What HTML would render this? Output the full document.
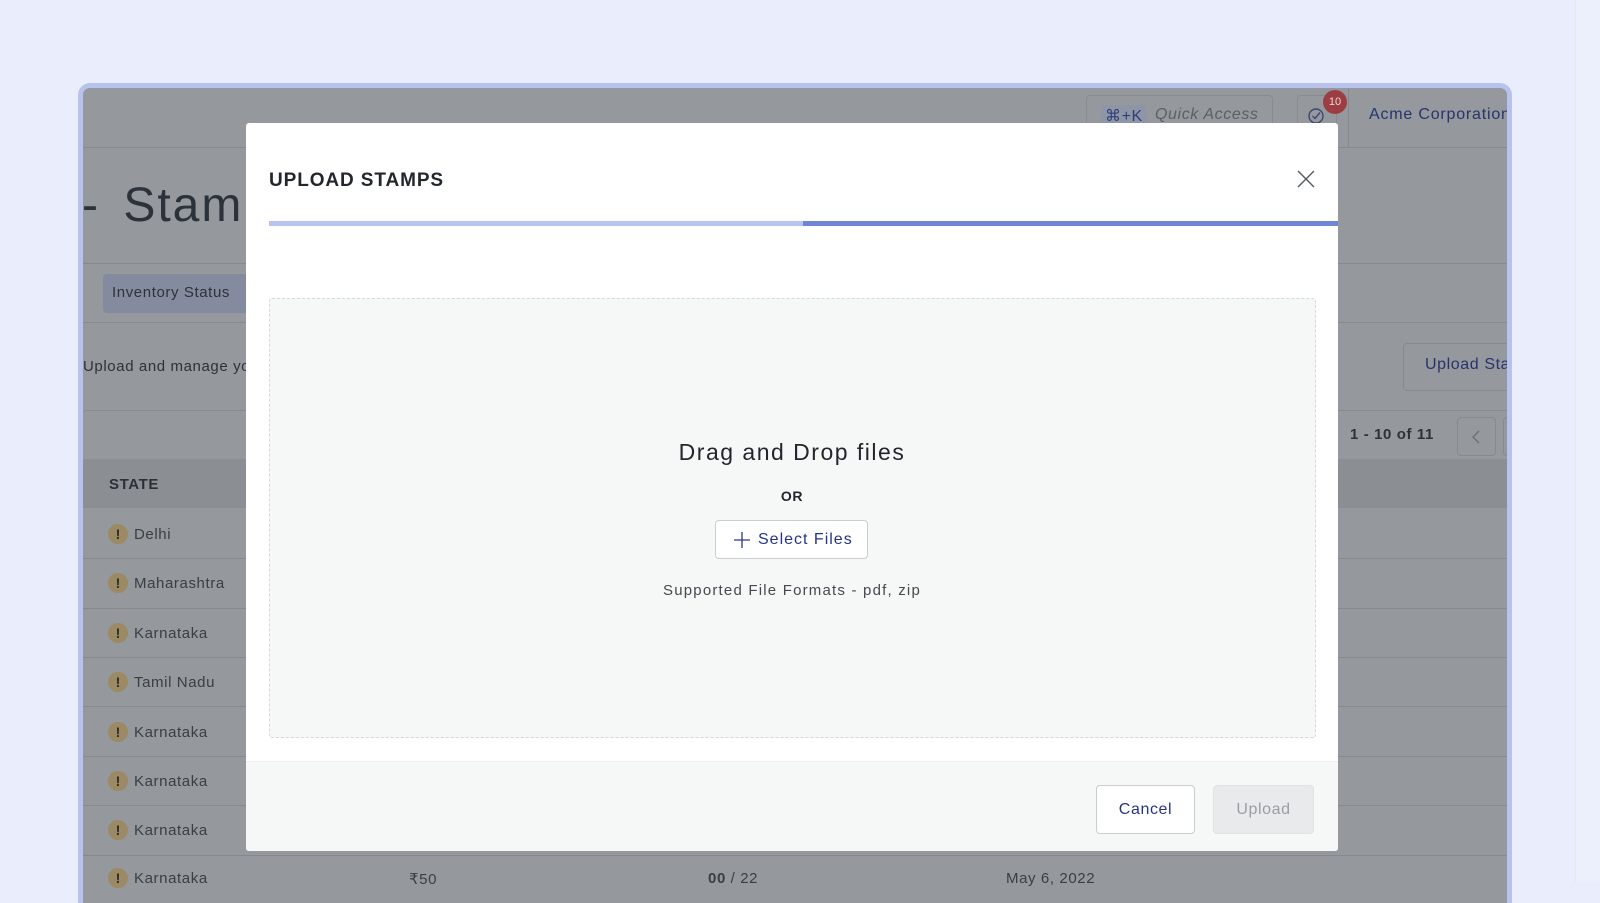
<!DOCTYPE html>
<html><head><meta charset="utf-8"><style>
*{box-sizing:border-box;margin:0;padding:0}
body{width:1600px;height:882px;overflow:hidden;background:#eaeefc;font-family:"Liberation Sans",sans-serif;position:relative;letter-spacing:0.6px}
.a{position:absolute}
.frame{left:78px;top:83px;width:1434px;height:820px;border:5px solid #b8c2ee;border-bottom:none;border-radius:12px 12px 0 0;background:#95989c;overflow:hidden}
.t{position:absolute;white-space:nowrap}
.line{position:absolute;height:1px;background:#868a8f}
.row{position:absolute;left:0;width:1430px;height:1px;background:#868a8f}
.warn{position:absolute;width:20px;height:20px;border-radius:50%;background:#9b8a63;color:#2b2b2b;font-weight:bold;font-size:14px;text-align:center;line-height:20px;letter-spacing:0}
.st{position:absolute;font-size:15px;color:#3a3e44}
.modal{left:246px;top:123px;width:1092px;height:728px;background:#fff;border-radius:3px;overflow:hidden}
</style></head><body>
<div class="a frame">
  <div class="line" style="left:0;top:59px;width:1430px"></div>
  <div class="a" style="left:1003px;top:7px;width:187px;height:44px;border:1px solid #888c91;border-radius:4px"></div>
  <div class="t" style="left:1018px;top:17px;font-size:16px;color:#2f3e7a;background:#8e95a6;padding:1px 4px;border-radius:3px">⌘+K</div>
  <div class="t" style="left:1072px;top:18px;font-size:16px;font-style:italic;color:#5b5f66">Quick Access</div>
  <div class="a" style="left:1214px;top:7px;width:40px;height:44px;border:1px solid #888c91;border-radius:4px"></div>
  <svg class="a" style="left:1224px;top:19px" width="18" height="18" viewBox="0 0 18 18"><circle cx="9" cy="9" r="7" fill="none" stroke="#3e4870" stroke-width="1.4"/><path d="M5.5 9l2.5 2.5 5-6" fill="none" stroke="#3e4870" stroke-width="1.4"/></svg>
  <div class="a" style="left:1240px;top:2px;width:24px;height:24px;border-radius:50%;background:#9b3d42;color:#f0d8d8;font-size:11px;text-align:center;line-height:24px;letter-spacing:0">10</div>
  <div class="a" style="left:1265px;top:0;width:1px;height:59px;background:#868a8f"></div>
  <div class="t" style="left:1286px;top:18px;font-size:16px;color:#26346e;letter-spacing:0.8px">Acme Corporation</div>
  <div class="t" style="left:-1px;top:90px;font-size:48px;color:#2c323a;letter-spacing:2px;word-spacing:8px">- Stamps</div>
  <div class="a" style="left:-6px;top:175px;width:1440px;height:60px;border:1px solid #868a8f;border-radius:4px"></div>
  <div class="a" style="left:20px;top:186px;width:160px;height:39px;background:#858b9f;border-radius:4px"></div>
  <div class="t" style="left:29px;top:196px;font-size:15px;color:#2d323a">Inventory Status</div>
  <div class="t" style="left:0;top:270px;font-size:15px;color:#2d323a">Upload and manage your stamps</div>
  <div class="a" style="left:1320px;top:255px;width:120px;height:48px;border:1px solid #868a8f;border-radius:4px"></div>
  <div class="t" style="left:1342px;top:268px;font-size:16px;color:#26346e">Upload Stamps</div>
  <div class="a" style="left:0;top:322px;width:1430px;height:49px;border-top:1px solid #868a8f;border-radius:4px 4px 0 0"></div>
  <div class="t" style="left:1267px;top:338px;font-size:15px;font-weight:bold;color:#2d323a">1 - 10 of 11</div>
  <div class="a" style="left:1374px;top:329px;width:39px;height:39px;border:1px solid #868a8f;border-radius:4px"></div>
  <svg class="a" style="left:1387px;top:341px" width="12" height="16"><path d="M9 2L3 8l6 6" fill="none" stroke="#6c7076" stroke-width="1.4"/></svg>
  <div class="a" style="left:1420px;top:329px;width:20px;height:39px;border:1px solid #868a8f;border-radius:4px"></div>
  <div class="a" style="left:0;top:371px;width:1430px;height:49px;background:#8b8f94"></div>
  <div class="t" style="left:26px;top:388px;font-size:15px;font-weight:bold;color:#2b3038">STATE</div>
  <div class="row" style="top:470px"></div><div class="row" style="top:520px"></div><div class="row" style="top:569px"></div><div class="row" style="top:618px"></div><div class="row" style="top:668px"></div><div class="row" style="top:717px"></div><div class="row" style="top:767px"></div>
  <div class="warn" style="left:25px;top:436px">!</div><div class="st" style="left:51px;top:438px">Delhi</div>
  <div class="warn" style="left:25px;top:485px">!</div><div class="st" style="left:51px;top:487px">Maharashtra</div>
  <div class="warn" style="left:25px;top:535px">!</div><div class="st" style="left:51px;top:537px">Karnataka</div>
  <div class="warn" style="left:25px;top:584px">!</div><div class="st" style="left:51px;top:586px">Tamil Nadu</div>
  <div class="warn" style="left:25px;top:634px">!</div><div class="st" style="left:51px;top:636px">Karnataka</div>
  <div class="warn" style="left:25px;top:683px">!</div><div class="st" style="left:51px;top:685px">Karnataka</div>
  <div class="warn" style="left:25px;top:732px">!</div><div class="st" style="left:51px;top:734px">Karnataka</div>
  <div class="warn" style="left:25px;top:780px">!</div><div class="st" style="left:51px;top:782px">Karnataka</div>
  <div class="st" style="left:326px;top:782px">₹50</div>
  <div class="st" style="left:625px;top:782px"><b>00</b> / 22</div>
  <div class="st" style="left:923px;top:782px">May 6, 2022</div>
</div>
<div class="a" style="left:1575px;top:0;width:25px;height:882px;background:#eceffc;border-left:1px solid #e4e7f4"></div>

<div class="a modal">
  <div class="t" style="left:23px;top:47px;font-size:19px;font-weight:bold;color:#22262d;letter-spacing:0.9px">UPLOAD STAMPS</div>
  <svg class="a" style="left:1051px;top:47px" width="18" height="18"><path d="M1 1L17 17M17 1L1 17" stroke="#555a61" stroke-width="1.4"/></svg>
  <div class="a" style="left:23px;top:98px;width:535px;height:5px;background:#b9c3ef"></div>
  <div class="a" style="left:557px;top:98px;width:535px;height:5px;background:#6f86d6"></div>
  <div class="a" style="left:23px;top:175px;width:1047px;height:440px;background:#f6f7f7;border:1px dashed #d6d9dc;border-radius:3px"></div>
  <div class="t" style="left:0;width:1092px;text-align:center;top:316px;font-size:23px;color:#22262d;letter-spacing:1.5px">Drag and Drop files</div>
  <div class="t" style="left:0;width:1092px;text-align:center;top:365px;font-size:14px;font-weight:bold;color:#22262d">OR</div>
  <div class="a" style="left:469px;top:397px;width:153px;height:39px;background:#fff;border:1px solid #c9cdd2;border-radius:4px"></div>
  <svg class="a" style="left:488px;top:409px" width="16" height="16"><path d="M8 0V16M0 8H16" stroke="#2c3a86" stroke-width="1.3"/></svg>
  <div class="t" style="left:512px;top:408px;font-size:16px;color:#26348a;letter-spacing:1px">Select Files</div>
  <div class="t" style="left:0;width:1092px;text-align:center;top:459px;font-size:15px;color:#454a51;letter-spacing:1.2px">Supported File Formats - pdf, zip</div>
  <div class="a" style="left:0;top:638px;width:1092px;height:90px;background:#f6f7f7;border-top:1px solid #eceeef"></div>
  <div class="a" style="left:850px;top:662px;width:99px;height:49px;background:#fff;border:1px solid #c9cdd2;border-radius:4px;text-align:center;line-height:47px;font-size:16px;color:#26348a">Cancel</div>
  <div class="a" style="left:967px;top:662px;width:101px;height:49px;background:#e9eaec;border:1px solid #dfe1e3;border-radius:4px;text-align:center;line-height:47px;font-size:16px;color:#9a9ea4">Upload</div>
</div>
</body></html>
